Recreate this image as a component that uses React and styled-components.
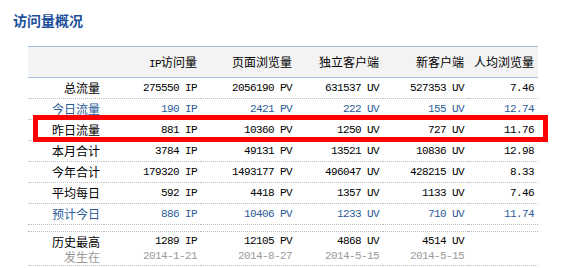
import React from "react";
import styled, { createGlobalStyle, css } from "styled-components";

const Global = createGlobalStyle`
  html, body { margin: 0; padding: 0; background: #fff; }
  body { font-family: "Noto Sans CJK SC", "Liberation Sans", sans-serif; color: #000; }
`;

const monoFont = css`
  font-family: "Liberation Mono", "DejaVu Sans Mono", monospace;
  font-size: 11px;
  letter-spacing: -0.6px;
`;

const Page = styled.div`
  padding: 12px 0 0 13px;
`;

const Title = styled.h2`
  margin: 0;
  font-size: 14px;
  line-height: 17px;
  font-weight: bold;
  color: #1c4f9c;
  font-family: "Noto Sans CJK SC", sans-serif;
`;

const TableWrap = styled.div`
  position: relative;
  margin: 17px 0 0 15px;
  width: 510px;
`;

const Table = styled.table`
  width: 510px;
  table-layout: fixed;
  border-collapse: collapse;
  font-size: 12px;
`;

const Th = styled.th`
  height: 30px;
  line-height: 30px;
  padding: 0 4px 0 0;
  text-align: right;
  font-weight: normal;
  background: #f3f3f3;
  border-top: 1px solid #a3bfe2;
  border-bottom: 1px solid #a3bfe2;
  white-space: nowrap;
  color: #000;
  font-size: 12px;
`;

const Mono = styled.span`
  ${monoFont};
  line-height: 1;
`;

const Td = styled.td`
  height: 20px;
  line-height: 20px;
  padding: 0 4px 0 0;
  text-align: right;
  white-space: pre;
  border-bottom: 1px dotted #bdbdbd;
  font-size: 12px;
  color: ${(p) => (p.$tone === "blue" ? "#2a5b98" : "#000")};
  ${(p) => p.$mono && monoFont};
`;

const SpacerCell = styled.td`
  height: 6px;
  padding: 0;
  border-bottom: 1px dotted #bdbdbd;
`;

const TallTd = styled.td`
  padding: 2px 4px 1px 0;
  text-align: right;
  white-space: pre;
  vertical-align: top;
  border-bottom: 1px dotted #bdbdbd;
`;

const Line = styled.div`
  line-height: 15px;
  height: 15px;
  font-size: 12px;
  color: ${(p) => (p.$muted ? "#9a9a9a" : "#000")};
  ${(p) => p.$mono && monoFont};
`;

const Highlight = styled.div`
  position: absolute;
  left: 5px;
  top: 69px;
  width: 515px;
  height: 27px;
  box-sizing: border-box;
  border: 5px solid #f00;
  pointer-events: none;
`;

const widths = [76, 97, 95, 87, 85, 70];

const rows = [
  { label: "总流量", v: ["275550 IP", "2056190 PV", "631537 UV", "527353 UV", "7.46"] },
  { label: "今日流量", tone: "blue", v: ["190 IP", "2421 PV", "222 UV", "155 UV", "12.74"] },
  { label: "昨日流量", v: ["881 IP", "10360 PV", "1250 UV", "727 UV", "11.76"] },
  { label: "本月合计", v: ["3784 IP", "49131 PV", "13521 UV", "10836 UV", "12.98"] },
  { label: "今年合计", v: ["179320 IP", "1493177 PV", "496047 UV", "428215 UV", "8.33"] },
  { label: "平均每日", v: ["592 IP", "4418 PV", "1357 UV", "1133 UV", "7.46"] },
  { label: "预计今日", tone: "blue", v: ["886 IP", "10406 PV", "1233 UV", "710 UV", "11.74"] },
];

const best = ["1289 IP", "12105 PV", "4868 UV", "4514 UV", ""];
const dates = ["2014-1-21", "2014-8-27", "2014-5-15", "2014-5-15", ""];

export default function App() {
  return (
    <Page>
      <Global />
      <Title>访问量概况</Title>
      <TableWrap>
        <Table>
          <colgroup>
            {widths.map((w, i) => (
              <col key={i} style={{ width: w }} />
            ))}
          </colgroup>
          <thead>
            <tr>
              <Th />
              <Th>
                <Mono>IP</Mono>访问量
              </Th>
              <Th>页面浏览量</Th>
              <Th>独立客户端</Th>
              <Th>新客户端</Th>
              <Th>人均浏览量</Th>
            </tr>
          </thead>
          <tbody>
            {rows.map((r) => (
              <tr key={r.label}>
                <Td $tone={r.tone}>{r.label}</Td>
                {r.v.map((x, i) => (
                  <Td key={i} $tone={r.tone} $mono>
                    {x}
                  </Td>
                ))}
              </tr>
            ))}
            <tr>
              <SpacerCell colSpan={6} />
            </tr>
            <tr>
              <TallTd>
                <Line>历史最高</Line>
                <Line $muted>发生在</Line>
              </TallTd>
              {best.map((x, i) => (
                <TallTd key={i}>
                  <Line $mono>{x}</Line>
                  <Line $muted $mono>
                    {dates[i]}
                  </Line>
                </TallTd>
              ))}
            </tr>
          </tbody>
        </Table>
        <Highlight />
      </TableWrap>
    </Page>
  );
}
